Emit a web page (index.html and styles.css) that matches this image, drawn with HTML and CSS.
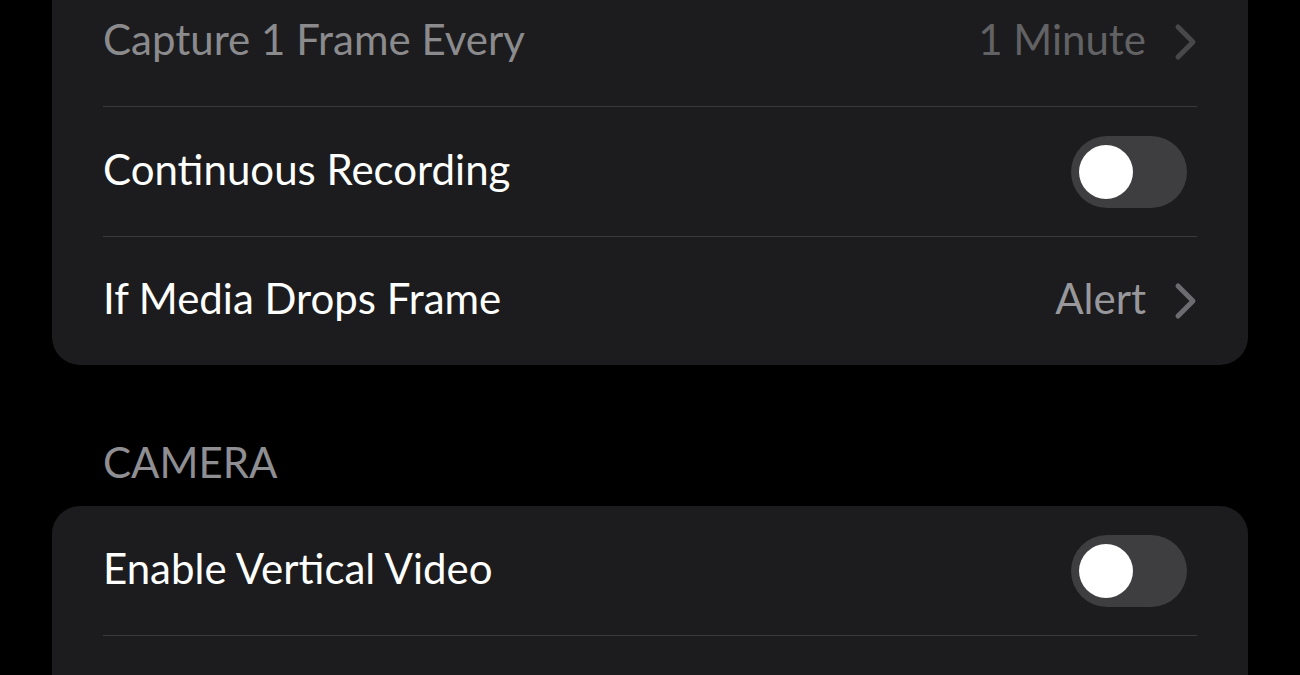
FILE: index.html
```
<!DOCTYPE html>
<html>
<head>
<meta charset="UTF-8">
<title>Settings</title>
<link rel="stylesheet" href="styles.css">
</head>
<body>

<div class="page">

	<!-- 타임랩스 설정 -->
	<div class="card cardTop">
		<div class="row">
			<div class="rowIn">
				<span class="label dim">Capture 1 Frame Every</span>
				<span class="value dimValue">1 Minute</span>
				<svg class="chev chevDim" width="23" height="38" viewBox="0 0 23 38"><path d="M4 4 L19 19 L4 34"/></svg>
			</div>
		</div>
		<div class="row">
			<div class="rowIn">
				<span class="label">Continuous Recording</span>
				<span class="switch"><span class="knob"></span></span>
			</div>
		</div>
		<div class="row">
			<div class="rowIn last">
				<span class="label">If Media Drops Frame</span>
				<span class="value">Alert</span>
				<svg class="chev" width="23" height="38" viewBox="0 0 23 38"><path d="M4 4 L19 19 L4 34"/></svg>
			</div>
		</div>
	</div>

	<div class="header">CAMERA</div>

	<!-- 카메라 설정 -->
	<div class="card">
		<div class="row">
			<div class="rowIn">
				<span class="label">Enable Vertical Video</span>
				<span class="switch"><span class="knob"></span></span>
			</div>
		</div>
		<div class="row">
			<div class="rowIn last"></div>
		</div>
	</div>

</div>

</body>
</html>
```

FILE: styles.css
```
* {box-sizing: border-box;}
html, body {margin: 0; background-color: #000000; height: 100%; overflow: hidden;}
body {font-family: Lato, "Noto Sans", sans-serif; font-size: 42px; color: #ffffff;}
.page {padding: 0 52px;}
.card {background-color: #1c1c1e; border-radius: 28px; overflow: hidden;}
.cardTop {margin-top: -23px; border-top-left-radius: 0; border-top-right-radius: 0;}
.row {padding: 0 51px;}
.rowIn {display: flex; align-items: center; height: 130px; border-bottom: 1px solid #3a3a3c; padding-bottom: 6px;}
.rowIn.last {border-bottom: none; height: 128px;}
.label {flex: 1; white-space: nowrap;}
.dim {color: #8b8b8e;}
.value {color: #98989c; margin-right: 28px;}
.dimValue {color: #626265;}
.chev {fill: none; stroke: #6c6c70; stroke-width: 5; stroke-linecap: round; stroke-linejoin: round; margin-top: 6px;}
.chevDim {stroke: #48484b;}
.switch {width: 116px; height: 72px; border-radius: 36px; background-color: #3e3e40; padding: 9px 8px; margin-right: 10px; margin-top: 6px; display: flex;}
.knob {width: 54px; height: 54px; border-radius: 50%; background-color: #ffffff;}
.header {color: #8e8e93; padding-left: 51px; line-height: 1.2; margin-top: 72px; margin-bottom: 19px;}
```
